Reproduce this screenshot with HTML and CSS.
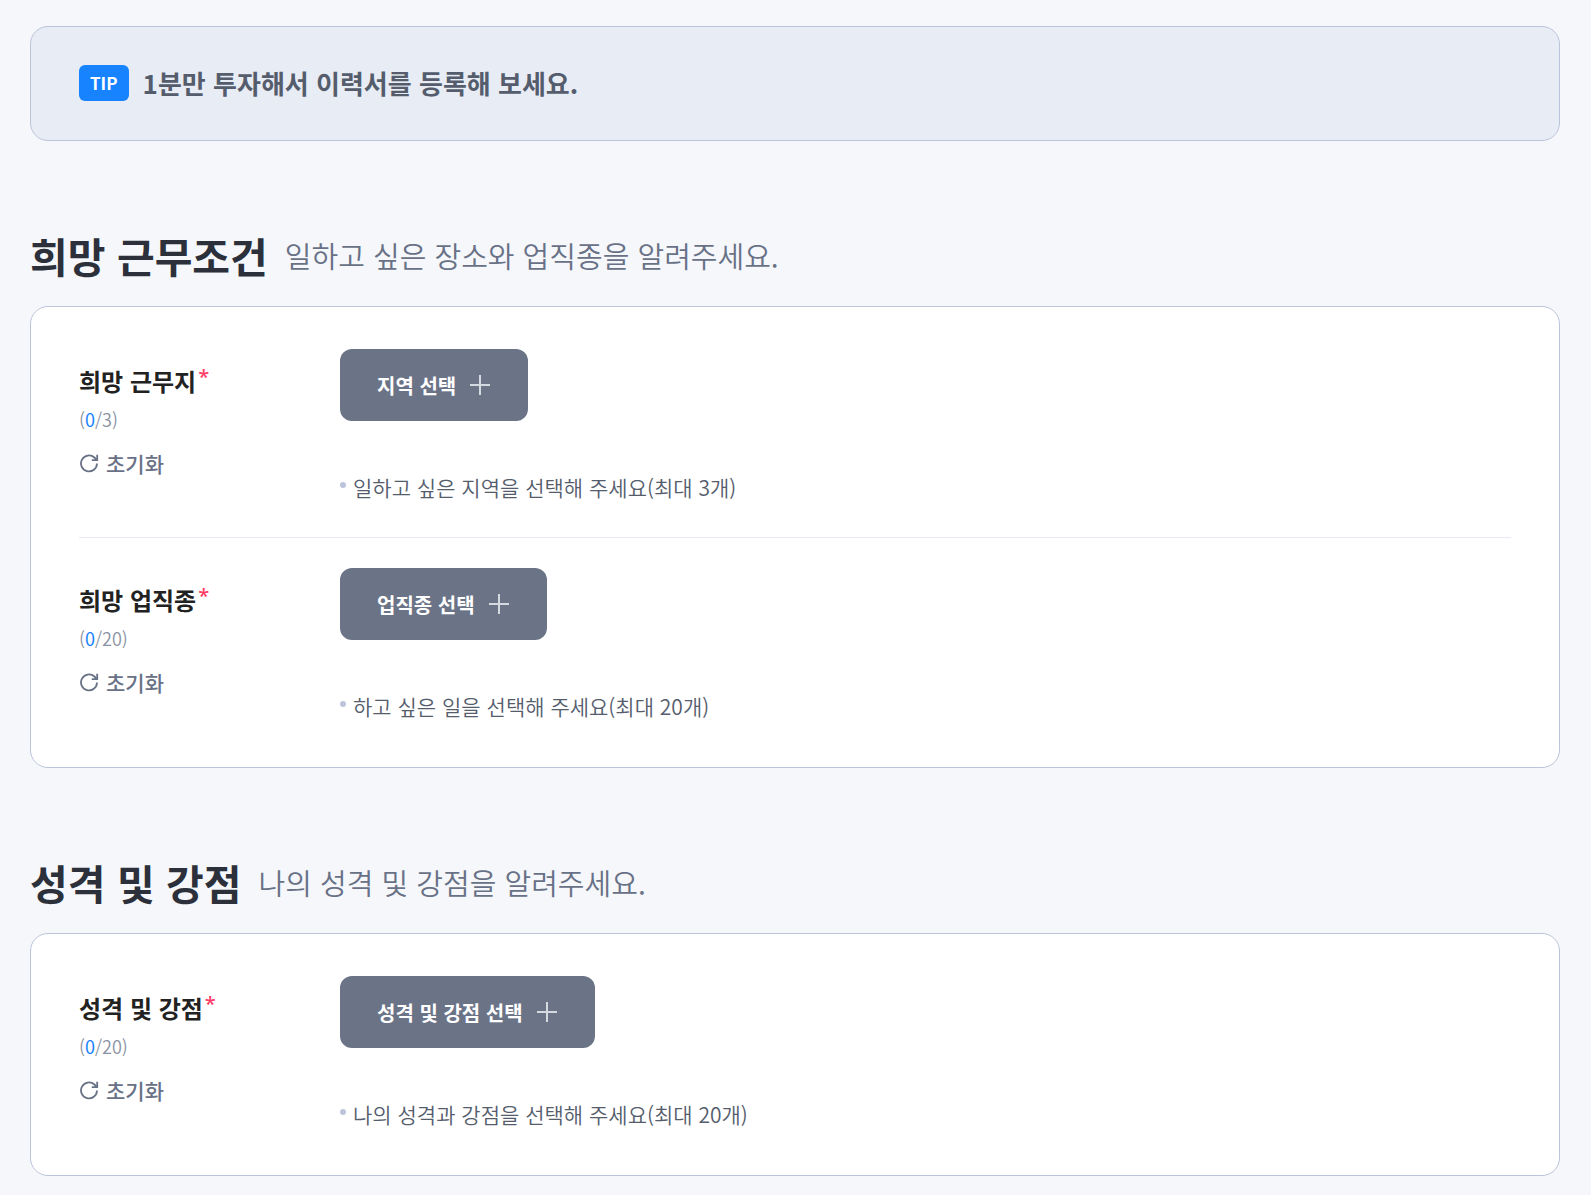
FILE: index.html
```html
<!DOCTYPE html>
<html lang="ko">
<head>
<meta charset="utf-8">
<meta name="viewport" content="width=device-width, initial-scale=1">
<title>이력서 등록</title>
<link rel="stylesheet" href="styles.css">
</head>
<body>
<svg class="sprite" aria-hidden="true">
  <symbol id="icon-reset" viewBox="0 0 20 20">
    <path d="M18 10.500a8 8 0 1 1-2.600-6l2 2" fill="none" stroke="currentColor" stroke-width="1.8"/>
    <path d="M18.200 1.700V7.100H12.800" fill="none" stroke="currentColor" stroke-width="1.8"/>
  </symbol>
  <symbol id="icon-plus" viewBox="0 0 20 20">
    <path d="M10 0V20M0 10H20" fill="none" stroke="currentColor" stroke-width="2"/>
  </symbol>
</svg>
<main class="page">
  <aside class="tip">
    <span class="tip-badge">TIP</span>
    <p class="tip-text">1분만 투자해서 이력서를 등록해 보세요.</p>
  </aside>

  <section class="section">
    <header class="section-head">
      <h2 class="section-title">희망 근무조건</h2>
      <p class="section-desc">일하고 싶은 장소와 업직종을 알려주세요.</p>
    </header>
    <div class="card">
      <div class="row">
        <div class="row-label">
          <h3 class="label">희망 근무지<span class="required">*</span></h3>
          <p class="count">(<span class="count-now">0</span>/3)</p>
          <button type="button" class="reset"><svg class="reset-icon" aria-hidden="true"><use href="#icon-reset"/></svg>초기화</button>
        </div>
        <div class="row-body">
          <button type="button" class="select">지역 선택<svg class="plus" aria-hidden="true"><use href="#icon-plus"/></svg></button>
          <p class="hint">일하고 싶은 지역을 선택해 주세요(최대 3개)</p>
        </div>
      </div>
      <div class="row">
        <div class="row-label">
          <h3 class="label">희망 업직종<span class="required">*</span></h3>
          <p class="count">(<span class="count-now">0</span>/20)</p>
          <button type="button" class="reset"><svg class="reset-icon" aria-hidden="true"><use href="#icon-reset"/></svg>초기화</button>
        </div>
        <div class="row-body">
          <button type="button" class="select">업직종 선택<svg class="plus" aria-hidden="true"><use href="#icon-plus"/></svg></button>
          <p class="hint">하고 싶은 일을 선택해 주세요(최대 20개)</p>
        </div>
      </div>
    </div>
  </section>

  <section class="section">
    <header class="section-head">
      <h2 class="section-title">성격 및 강점</h2>
      <p class="section-desc">나의 성격 및 강점을 알려주세요.</p>
    </header>
    <div class="card">
      <div class="row">
        <div class="row-label">
          <h3 class="label">성격 및 강점<span class="required">*</span></h3>
          <p class="count">(<span class="count-now">0</span>/20)</p>
          <button type="button" class="reset"><svg class="reset-icon" aria-hidden="true"><use href="#icon-reset"/></svg>초기화</button>
        </div>
        <div class="row-body">
          <button type="button" class="select">성격 및 강점 선택<svg class="plus" aria-hidden="true"><use href="#icon-plus"/></svg></button>
          <p class="hint">나의 성격과 강점을 선택해 주세요(최대 20개)</p>
        </div>
      </div>
    </div>
  </section>
</main>
</body>
</html>
```
FILE: styles.css
```css
* {
  box-sizing: border-box;
}

body,
h2,
h3,
p {
  margin: 0;
}

body {
  background: #f5f7fb;
  color: #222;
  font-family: "Noto Sans CJK KR", "Noto Sans", sans-serif;
}

button {
  border: 0;
  font: inherit;
  cursor: pointer;
}

.sprite {
  display: none;
}

.page {
  padding: 26px 31px 18px 30px;
}

.tip {
  display: flex;
  align-items: center;
  gap: 14px;
  padding: 38px 48px 39px;
  border: 1px solid #bbc4da;
  border-radius: 18px;
  background: #e8ecf5;
}

.tip-badge {
  padding: 0 11px;
  border-radius: 6px;
  background: #1783ff;
  color: #fff;
  font-size: 17px;
  font-weight: 700;
  line-height: 36px;
}

.tip-text {
  color: #555d6d;
  font-size: 26px;
  font-weight: 700;
  line-height: 36px;
}

.section {
  padding-top: 82px;
}

.section-head {
  display: flex;
  align-items: center;
  gap: 17px;
  padding-bottom: 19px;
}

.section-title {
  color: #2b303a;
  font-size: 41px;
  font-weight: 700;
  line-height: 64px;
}

.section-desc {
  color: #687186;
  font-size: 29px;
  font-weight: 350;
  line-height: 64px;
}

.card {
  padding: 42px 48px 44px;
  border: 1px solid #bbc4da;
  border-radius: 18px;
  background: #fff;
}

.row {
  display: flex;
}

.row + .row {
  margin-top: 33px;
  padding-top: 30px;
  border-top: 1px solid #e8ebf5;
}

.row-label {
  display: flex;
  flex-direction: column;
  align-items: flex-start;
  flex: 0 0 261px;
  padding-top: 14px;
}

.label {
  display: flex;
  gap: 2px;
  font-size: 24px;
  font-weight: 700;
  line-height: 36px;
}

.required {
  color: #ff3b64;
  font-family: "Noto Sans", sans-serif;
  font-size: 20px;
  font-weight: 500;
  line-height: 28px;
}

.count {
  margin-top: 5px;
  color: #8a92a3;
  font-size: 18px;
  font-weight: 350;
  line-height: 30px;
}

.count-now {
  color: #1783ff;
  font-weight: 400;
}

.reset {
  display: flex;
  align-items: center;
  gap: 7px;
  margin-top: 14px;
  padding: 0;
  background: none;
  color: #687186;
  font-size: 21px;
  font-weight: 500;
  line-height: 30px;
}

.reset-icon {
  width: 20px;
  height: 20px;
}

.row-body {
  flex: 1;
}

.select {
  display: flex;
  align-items: center;
  gap: 14px;
  height: 72px;
  padding: 0 38px 0 37px;
  border-radius: 12px;
  background: #6b7387;
  color: #fff;
  font-size: 20px;
  font-weight: 700;
}

.plus {
  width: 20px;
  height: 20px;
  color: #d5d9e0;
}

.hint {
  display: flex;
  align-items: center;
  gap: 7px;
  margin-top: 49px;
  color: #555d6d;
  font-size: 21px;
  font-weight: 350;
  line-height: 34px;
}

.hint::before {
  content: "";
  width: 6px;
  height: 6px;
  margin-bottom: 4px;
  border-radius: 50%;
  background: #bbc4da;
}
```
